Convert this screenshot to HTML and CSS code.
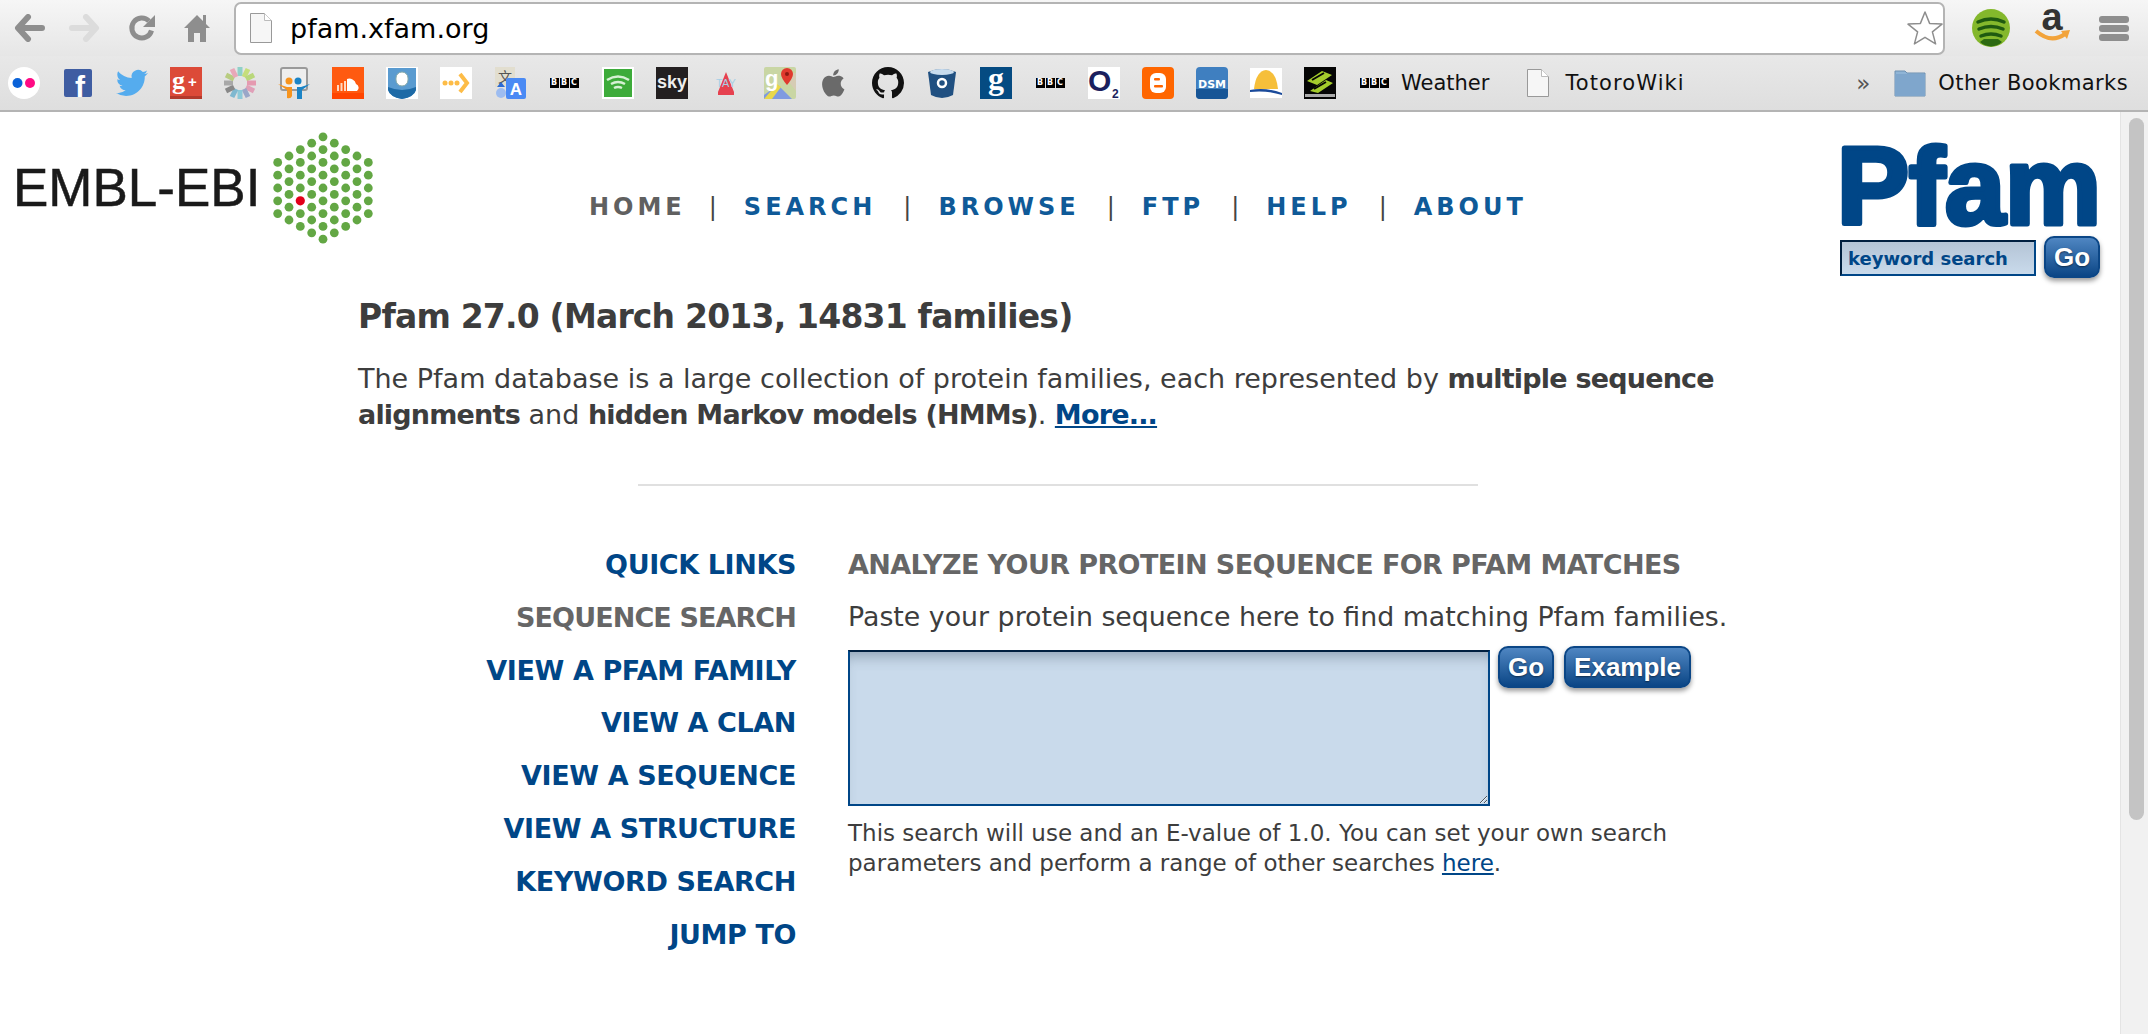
FILE: index.html
```html
<!DOCTYPE html>
<html lang="en">
<head>
    <meta charset="UTF-8">
    <title>Pfam: Home page</title>
    <link rel="stylesheet" href="styles.css">
</head>
<body>
    <div class="toolbar">
        <svg class="tool-icon back" viewBox="0 0 32 28"><path d="M28 14H5M14 3L4 14l10 11" fill="none" stroke="#8e8e8e" stroke-width="6" stroke-linecap="round" stroke-linejoin="round"/></svg>
        <svg class="tool-icon forward" viewBox="0 0 32 28"><path d="M4 14h23M18 3l10 11-10 11" fill="none" stroke="#dcdcdc" stroke-width="6" stroke-linecap="round" stroke-linejoin="round"/></svg>
        <svg class="tool-icon reload" viewBox="0 0 28 28"><path d="M21 7a10 10 0 1 0 2.5 9.5" fill="none" stroke="#8e8e8e" stroke-width="5"/><path d="M27 1v12H15z" fill="#8e8e8e"/></svg>
        <svg class="tool-icon home" viewBox="0 0 26 28"><path d="M13 1L0 14h4v14h6v-9h6v9h6V14h4l-4-4V1h-3v6z" fill="#8e8e8e"/></svg>
        <div class="omnibox">
            <svg class="page-icon" viewBox="0 0 22 30"><path d="M.5.5h14l7 7v22H.5z" fill="#f6f6f6" stroke="#999"/><path d="M14.5.5v7h7" fill="#fff" stroke="#bbb"/></svg>
            <span class="url">pfam.xfam.org</span>
            <svg class="star" viewBox="0 0 36 36"><path d="M18 2l4.6 11.4 12.4.7-9.6 7.8 3.2 12L18 27.3 7.4 33.9l3.2-12L1 14.1l12.4-.7z" fill="#fff" stroke="#8e8e8e" stroke-width="1.5" stroke-linejoin="round"/></svg>
        </div>
        <svg class="ext-icon spotify" viewBox="0 0 38 38"><circle cx="19" cy="19" r="19" fill="#84b82c"/><path d="M8 33a16 16 0 0 0 22 0l-4-3H12z" fill="#2d6a12"/><path d="M6 13q13-6 26 0M7 20q12-5 24 0M9 27q10-4 20 0" fill="none" stroke="#1f5a10" stroke-width="3.5" stroke-linecap="round"/></svg>
        <svg class="ext-icon amazon" viewBox="0 0 36 36"><text x="17" y="20" class="amazon-a">a</text><path d="M1 21q15 13 29 3" fill="none" stroke="#f2a33a" stroke-width="4"/><path d="M26 21l9-1-3 9z" fill="#f2a33a"/></svg>
        <div class="menu-icon"><span></span><span></span><span></span></div>
    </div>

    <div class="bookmarks">
        <div class="favicons">
            <svg viewBox="0 0 32 32"><circle cx="16" cy="16" r="16" fill="#fff"/><circle cx="9.5" cy="16" r="5" fill="#0a62d8"/><circle cx="22" cy="16" r="5" fill="#ff0a84"/></svg>
            <svg viewBox="0 0 32 32"><rect x="2" y="2" width="28" height="28" rx="2" fill="#3f5da2"/><text x="13" y="30" class="fav-f">f</text></svg>
            <svg viewBox="0 0 24 24"><path d="M23.95 4.57a10 10 0 0 1-2.82.77 4.96 4.96 0 0 0 2.16-2.72c-.95.55-2 .96-3.13 1.18a4.92 4.92 0 0 0-8.38 4.48C7.69 8.09 4.07 6.13 1.64 3.16a4.82 4.82 0 0 0-.67 2.48c0 1.71.87 3.21 2.19 4.1a4.9 4.9 0 0 1-2.23-.62v.06a4.92 4.92 0 0 0 3.95 4.83 5 5 0 0 1-2.21.08 4.94 4.94 0 0 0 4.6 3.42A9.87 9.87 0 0 1 0 19.54a14 14 0 0 0 7.56 2.21c9.05 0 14-7.5 14-13.98 0-.21 0-.42-.02-.63A9.94 9.94 0 0 0 24 4.59z" fill="#55acee"/></svg>
            <svg viewBox="0 0 32 32"><rect width="32" height="32" fill="#dc4a38"/><rect y="29" width="32" height="3" fill="#b23a2c"/><text x="2" y="22" class="fav-g">g</text><text x="18" y="20" class="fav-plus">+</text></svg>
            <svg viewBox="0 0 32 32">
                <g stroke-width="5">
                    <path d="M16 0v9" stroke="#8fd0c8"/><path d="M24 2l-4 8" stroke="#c6de7a"/><path d="M30 8l-8 4" stroke="#b9d77a"/><path d="M32 16h-9" stroke="#e59ab0"/>
                    <path d="M30 24l-8-4" stroke="#e0a0b8"/><path d="M24 30l-4-8" stroke="#9aa7c8"/><path d="M16 32v-9" stroke="#8cc9d8"/><path d="M8 30l4-8" stroke="#7fb8d0"/>
                    <path d="M2 24l8-4" stroke="#888"/><path d="M0 16h9" stroke="#a8a8a8"/><path d="M2 8l8 4" stroke="#b8cc80"/><path d="M8 2l4 8" stroke="#e8a8b8"/>
                </g>
            </svg>
            <svg viewBox="0 0 32 32"><rect x="3" y="1" width="26" height="22" rx="2" fill="#eee" stroke="#9a9a9a" stroke-width="2"/><circle cx="11" cy="14" r="3.5" fill="#f7941e"/><circle cx="20" cy="14" r="3.5" fill="#1b84c6"/><path d="M32 17l-9 3h-4v12h5v-9z" fill="#1b84c6"/><path d="M0 17l9 3h5v9q-1 3-5 2v-8z" fill="#f7941e"/></svg>
            <svg viewBox="0 0 32 32"><rect width="32" height="32" fill="#ff5a10"/><rect y="26" width="32" height="6" fill="#ff4500"/><path d="M5 24v-6h2v6zM8.5 24v-8h2v8zM12 24V14h2v10z" fill="#ffd9c4"/><path d="M15 24V12a7 7 0 0 1 9 5 4 4 0 0 1 1 7z" fill="#fff"/></svg>
            <svg viewBox="0 0 32 32"><rect width="32" height="32" fill="#fff"/><path d="M2 1h28v22q-2 7-14 9Q4 30 2 23z" fill="#5a9bd0"/><path d="M2 20q14 6 28 0v3q-2 7-14 9Q4 30 2 23z" fill="#1d6aa6"/><rect x="10" y="5" width="12" height="14" rx="6" fill="#fff" stroke="#8aa"/></svg>
            <svg viewBox="0 0 32 32"><rect width="32" height="32" fill="#fff"/><circle cx="5" cy="16" r="2.5" fill="#fdbc47"/><circle cx="11" cy="16" r="2.5" fill="#fdbc47"/><circle cx="17" cy="16" r="2.5" fill="#fdbc47"/><path d="M20 7l7 9-7 9" fill="none" stroke="#fdbc47" stroke-width="4"/></svg>
            <svg viewBox="0 0 32 32"><rect x="1" width="20" height="20" fill="#e2decf"/><text x="11" y="15" class="fav-cjk">文</text><rect x="12" y="11" width="20" height="21" rx="2" fill="#4a8af4"/><text x="22" y="28" class="fav-a">A</text><circle cx="7" cy="26" r="5" fill="#9dbcf0"/><path d="M7 15l4 5H3z" fill="#2a6ad4"/></svg>
            <div class="bbc"><span>B</span><span>B</span><span>C</span></div>
            <svg viewBox="0 0 32 32"><rect x="1" y="1" width="30" height="30" fill="#3dab3a" stroke="#fff" stroke-width="2"/><path d="M5 13q11-7 22 0M9 17q7-4 14 0M12 21q4-2 8 0" fill="none" stroke="#d6f0d4" stroke-width="2.5"/></svg>
            <svg viewBox="0 0 32 32"><rect width="32" height="32" fill="#231f20"/><text x="16" y="21" class="fav-sky">sky</text></svg>
            <svg viewBox="0 0 32 32"><path d="M16 5l8 20v3H8v-3z" fill="#e6414f"/><text x="16" y="20" class="fav-tay">TAY</text></svg>
            <svg viewBox="0 0 32 32"><rect width="32" height="32" rx="2" fill="#c9d6a4"/><path d="M18 6h14v18z" fill="#d6ccb4"/><path d="M0 28l14-10 14 14H0z" fill="#7f9be0"/><path d="M0 32l13-15 4 3-9 12z" fill="#e8d84c"/><text x="1" y="19" class="fav-maps">g</text><path d="M23 1a6 6 0 0 1 6 6q0 4-6 11-6-7-6-11a6 6 0 0 1 6-6z" fill="#e03a2e"/><circle cx="23" cy="7" r="2" fill="#8c1a12"/></svg>
            <svg viewBox="0 0 24 24"><path d="M17.05 12.54c-.03-2.6 2.12-3.85 2.22-3.91-1.21-1.77-3.09-2.01-3.76-2.04-1.6-.16-3.12.94-3.93.94-.81 0-2.06-.92-3.39-.89-1.74.03-3.35 1.01-4.25 2.57-1.81 3.14-.46 7.79 1.3 10.34.86 1.25 1.89 2.65 3.24 2.6 1.3-.05 1.79-.84 3.36-.84s2.01.84 3.39.81c1.4-.02 2.28-1.27 3.14-2.52.99-1.45 1.4-2.85 1.42-2.92-.03-.01-2.72-1.04-2.74-4.14zM14.47 4.9c.72-.87 1.2-2.08 1.07-3.28-1.03.04-2.28.69-3.02 1.55-.66.77-1.24 2-1.09 3.18 1.15.09 2.32-.58 3.04-1.45z" fill="#6a6a6a"/></svg>
            <svg viewBox="0 0 16 16"><path d="M8 0C3.58 0 0 3.58 0 8c0 3.54 2.29 6.53 5.47 7.59.4.07.55-.17.55-.38 0-.19-.01-.82-.01-1.49-2.01.37-2.53-.49-2.69-.94-.09-.23-.48-.94-.82-1.13-.28-.15-.68-.52-.01-.53.63-.01 1.08.58 1.23.82.72 1.21 1.87.87 2.33.66.07-.52.28-.87.51-1.07-1.78-.2-3.64-.89-3.64-3.95 0-.87.31-1.59.82-2.15-.08-.2-.36-1.02.08-2.12 0 0 .67-.21 2.2.82.64-.18 1.32-.27 2-.27s1.36.09 2 .27c1.53-1.04 2.2-.82 2.2-.82.44 1.1.16 1.92.08 2.12.51.56.82 1.27.82 2.15 0 3.07-1.87 3.75-3.65 3.95.29.25.54.73.54 1.48 0 1.07-.01 1.93-.01 2.2 0 .21.15.46.55.38A8.01 8.01 0 0 0 16 8c0-4.42-3.58-8-8-8z" fill="#111"/></svg>
            <svg viewBox="0 0 32 32"><path d="M2 5q14-6 28 0l-3 23q-11 6-22 0z" fill="#205081"/><ellipse cx="16" cy="5" rx="12" ry="3" fill="#c8dcee"/><circle cx="16" cy="16" r="4" fill="none" stroke="#fff" stroke-width="2.5"/></svg>
            <svg viewBox="0 0 32 32"><rect width="32" height="32" fill="#054b82"/><text x="16" y="22" class="fav-guardian">g</text></svg>
            <div class="bbc"><span>B</span><span>B</span><span>C</span></div>
            <svg viewBox="0 0 32 32"><rect width="32" height="32" fill="#fff"/><text x="0" y="24" class="fav-o">O</text><text x="24" y="31" class="fav-two">2</text></svg>
            <svg viewBox="0 0 32 32"><rect width="32" height="32" rx="4" fill="#ff6600"/><rect x="8" y="6" width="16" height="20" rx="6" fill="#fff"/><rect x="12" y="11" width="6" height="2.5" rx="1" fill="#ff6600"/><rect x="12" y="18" width="9" height="2.5" rx="1" fill="#ff6600"/></svg>
            <svg viewBox="0 0 32 32"><rect width="32" height="32" rx="4" fill="#3f7fc0"/><path d="M0 22h32v6a4 4 0 0 1-4 4H4a4 4 0 0 1-4-4z" fill="#175596"/><text x="16" y="21" class="fav-dsm">DSM</text></svg>
            <svg viewBox="0 0 32 32"><rect y="1" width="32" height="30" fill="#fff"/><path d="M4 22Q6 4 16 3q10 1 12 19z" fill="#f6bf3a"/><path d="M0 23q16-3 32 3v2Q16 23 0 25z" fill="#1a4a9a"/></svg>
            <svg viewBox="0 0 32 32"><rect width="32" height="32" fill="#050505"/><path d="M3 14L18 4l10 4-15 10zM6 24l16-11 7 3-15 10z" fill="#a4cc2c"/><path d="M8 13l12-7M10 22l12-7" stroke="#050505" stroke-width="2"/><rect x="1" y="27" width="30" height="3" fill="#aaa"/></svg>
            <a class="bookmark weather"><div class="bbc"><span>B</span><span>B</span><span>C</span></div>Weather</a>
            <a class="bookmark totoro"><svg class="bookmark-page" viewBox="0 0 22 28"><path d="M.5.5h14l7 7v20H.5z" fill="#f6f6f6" stroke="#999"/><path d="M14.5.5v7h7" fill="#fff" stroke="#bbb"/></svg>TotoroWiki</a>
        </div>
        <div class="other">
            <span class="chevron">»</span>
            <svg class="folder" viewBox="0 0 32 28"><path d="M1 27V2h10l2 2h18v23z" fill="#8fb4d6" stroke="#6d8fb0"/><rect x="1" y="5" width="30" height="22" fill="#7fa6cc"/></svg>
            <span class="other-label">Other Bookmarks</span>
        </div>
    </div>

    <div class="viewport">
        <div class="page">
            <header class="site-header">
                <div class="ebi-logo">
                    <span class="ebi-text">EMBL-EBI</span>
                    <svg class="ebi-hex" viewBox="0 0 100 112">
                        <g fill="#63a744">
                            <circle cx="4.7" cy="30.4" r="4.4"/><circle cx="4.7" cy="43.2" r="4.4"/><circle cx="4.7" cy="56" r="4.4"/><circle cx="4.7" cy="68.8" r="4.4"/><circle cx="4.7" cy="81.6" r="4.4"/>
                            <circle cx="16" cy="24" r="4.4"/><circle cx="16" cy="36.8" r="4.4"/><circle cx="16" cy="49.6" r="4.4"/><circle cx="16" cy="62.4" r="4.4"/><circle cx="16" cy="75.2" r="4.4"/><circle cx="16" cy="88" r="4.4"/>
                            <circle cx="27.3" cy="17.6" r="4.4"/><circle cx="27.3" cy="30.4" r="4.4"/><circle cx="27.3" cy="43.2" r="4.4"/><circle cx="27.3" cy="56" r="4.4"/><circle cx="27.3" cy="81.6" r="4.4"/><circle cx="27.3" cy="94.4" r="4.4"/>
                            <circle cx="38.7" cy="11.2" r="4.4"/><circle cx="38.7" cy="24" r="4.4"/><circle cx="38.7" cy="36.8" r="4.4"/><circle cx="38.7" cy="49.6" r="4.4"/><circle cx="38.7" cy="62.4" r="4.4"/><circle cx="38.7" cy="75.2" r="4.4"/><circle cx="38.7" cy="88" r="4.4"/><circle cx="38.7" cy="100.8" r="4.4"/>
                            <circle cx="50" cy="4.8" r="4.4"/><circle cx="50" cy="17.6" r="4.4"/><circle cx="50" cy="30.4" r="4.4"/><circle cx="50" cy="43.2" r="4.4"/><circle cx="50" cy="56" r="4.4"/><circle cx="50" cy="68.8" r="4.4"/><circle cx="50" cy="81.6" r="4.4"/><circle cx="50" cy="94.4" r="4.4"/><circle cx="50" cy="107.2" r="4.4"/>
                            <circle cx="61.3" cy="11.2" r="4.4"/><circle cx="61.3" cy="24" r="4.4"/><circle cx="61.3" cy="36.8" r="4.4"/><circle cx="61.3" cy="49.6" r="4.4"/><circle cx="61.3" cy="62.4" r="4.4"/><circle cx="61.3" cy="75.2" r="4.4"/><circle cx="61.3" cy="88" r="4.4"/><circle cx="61.3" cy="100.8" r="4.4"/>
                            <circle cx="72.7" cy="17.6" r="4.4"/><circle cx="72.7" cy="30.4" r="4.4"/><circle cx="72.7" cy="43.2" r="4.4"/><circle cx="72.7" cy="56" r="4.4"/><circle cx="72.7" cy="68.8" r="4.4"/><circle cx="72.7" cy="81.6" r="4.4"/><circle cx="72.7" cy="94.4" r="4.4"/>
                            <circle cx="84" cy="24" r="4.4"/><circle cx="84" cy="36.8" r="4.4"/><circle cx="84" cy="49.6" r="4.4"/><circle cx="84" cy="62.4" r="4.4"/><circle cx="84" cy="75.2" r="4.4"/><circle cx="84" cy="88" r="4.4"/>
                            <circle cx="95.3" cy="30.4" r="4.4"/><circle cx="95.3" cy="43.2" r="4.4"/><circle cx="95.3" cy="56" r="4.4"/><circle cx="95.3" cy="68.8" r="4.4"/><circle cx="95.3" cy="81.6" r="4.4"/>
                        </g>
                        <circle cx="27.3" cy="68.8" r="4.6" fill="#e2001a"/>
                    </svg>
                </div>
                <nav class="site-nav">
                    <a class="current">HOME</a><span class="sep">|</span>
                    <a>SEARCH</a><span class="sep">|</span>
                    <a>BROWSE</a><span class="sep">|</span>
                    <a>FTP</a><span class="sep">|</span>
                    <a>HELP</a><span class="sep">|</span>
                    <a>ABOUT</a>
                </nav>
                <div class="pfam-box">
                    <svg class="pfam-logo" viewBox="0 0 270 92"><text x="2" y="84" textLength="264" lengthAdjust="spacingAndGlyphs">Pfam</text></svg>
                    <div class="keyword-row">
                        <input class="keyword" type="text" value="keyword search">
                        <button class="btn">Go</button>
                    </div>
                </div>
            </header>

            <main class="content">
                <h1>Pfam 27.0 (March 2013, 14831 families)</h1>
                <p class="intro">The Pfam database is a large collection of protein families, each represented by <strong>multiple sequence alignments</strong> and <strong>hidden Markov models (HMMs)</strong>. <a class="more">More...</a></p>
                <hr class="divider">

                <div class="columns">
                    <ul class="quick-links">
                        <li class="link">QUICK LINKS</li>
                        <li class="active">SEQUENCE SEARCH</li>
                        <li class="link">VIEW A PFAM FAMILY</li>
                        <li class="link">VIEW A CLAN</li>
                        <li class="link">VIEW A SEQUENCE</li>
                        <li class="link">VIEW A STRUCTURE</li>
                        <li class="link">KEYWORD SEARCH</li>
                        <li class="link">JUMP TO</li>
                    </ul>
                    <section class="panel">
                        <h2>ANALYZE YOUR PROTEIN SEQUENCE FOR PFAM MATCHES</h2>
                        <p class="paste">Paste your protein sequence here to find matching Pfam families.</p>
                        <div class="seq-row">
                            <textarea class="seq-input"></textarea>
                            <button class="btn">Go</button>
                            <button class="btn">Example</button>
                        </div>
                        <p class="note">This search will use and an E-value of 1.0. You can set your own search parameters and perform a range of other searches <a>here</a>.</p>
                    </section>
                </div>
            </main>
        </div>
        <div class="scrollbar"><div class="thumb"></div></div>
    </div>
</body>
</html>
```

FILE: styles.css
```css
/* Base Styles */
* {
    margin: 0;
    padding: 0;
    box-sizing: border-box;
}

html, body {
    height: 100%;
    overflow: hidden;
}

body {
    font-family: "DejaVu Sans", sans-serif;
    background-color: #fff;
    color: #3d3d3d;
    display: flex;
    flex-direction: column;
}

/* Browser toolbar */
.toolbar {
    height: 56px;
    display: flex;
    align-items: center;
    background: linear-gradient(#f6f6f6, #e6e6e6);
}

.tool-icon {
    height: 28px;
    flex: none;
}

.back {
    width: 32px;
    margin-left: 14px;
}

.forward {
    width: 32px;
    margin-left: 22px;
}

.reload {
    width: 28px;
    margin-left: 28px;
}

.home {
    width: 26px;
    margin-left: 28px;
}

.omnibox {
    width: 1711px;
    height: 53px;
    margin-left: 24px;
    display: flex;
    align-items: center;
    background-color: #fff;
    border: 2px solid #b4b4b4;
    border-radius: 7px;
    padding: 0 0 0 14px;
}

.page-icon {
    width: 22px;
    height: 30px;
}

.url {
    margin-left: 18px;
    font-size: 27px;
    color: #000;
}

.star {
    width: 36px;
    height: 36px;
    margin-left: auto;
}

.ext-icon {
    flex: none;
}

.spotify {
    width: 38px;
    height: 38px;
    margin-left: 27px;
}

.amazon {
    width: 36px;
    height: 36px;
    margin-left: 25px;
    overflow: visible;
}

.amazon-a {
    font-family: "Liberation Sans", sans-serif;
    font-weight: bold;
    font-size: 38px;
    fill: #333;
    text-anchor: middle;
}

.menu-icon {
    width: 30px;
    margin-left: 28px;
    display: flex;
    flex-direction: column;
    gap: 2px;
}

.menu-icon span {
    height: 7px;
    border-radius: 3px;
    background-color: #8e8e8e;
}

/* Bookmarks bar */
.bookmarks {
    height: 56px;
    display: flex;
    align-items: center;
    background: linear-gradient(#e8e8e8, #dedede);
    border-bottom: 2px solid #b4b4b4;
    font-size: 21px;
    color: #111;
}

.favicons {
    display: flex;
    align-items: center;
    gap: 22px;
    padding-left: 8px;
}

.favicons > svg {
    width: 32px;
    height: 32px;
    flex: none;
}

.bbc {
    width: 32px;
    flex: none;
    display: flex;
    justify-content: center;
    gap: 1px;
}

.bbc span {
    width: 9px;
    height: 10px;
    background-color: #000;
    color: #fff;
    font-size: 8px;
    line-height: 10px;
    font-weight: bold;
    text-align: center;
}

.bookmark {
    display: flex;
    align-items: center;
    flex: none;
}

.weather {
    gap: 11px;
}

.totoro {
    margin-left: 16px;
    gap: 16px;
    letter-spacing: 1.1px;
}

.bookmark-page {
    width: 22px;
    height: 28px;
}

.other {
    margin-left: auto;
    padding-right: 20px;
    display: flex;
    align-items: center;
}

.other-label {
    letter-spacing: 0.4px;
}

.chevron {
    margin-right: 24px;
    font-size: 23px;
    color: #555;
}

.folder {
    width: 32px;
    height: 28px;
    margin-right: 12px;
}

/* Favicon lettering */
.fav-f {
    font: bold 30px "Liberation Sans", sans-serif;
    fill: #fff;
}

.fav-g {
    font: bold 26px "Liberation Serif", serif;
    fill: #fff;
}

.fav-plus {
    font: bold 15px "Liberation Sans", sans-serif;
    fill: #fff;
}

.fav-cjk {
    font: 14px "Noto Sans CJK SC", sans-serif;
    fill: #555;
    text-anchor: middle;
}

.fav-a {
    font: bold 17px "Liberation Sans", sans-serif;
    fill: #fff;
    text-anchor: middle;
}

.fav-sky {
    font: bold 18px "Liberation Sans", sans-serif;
    fill: #eee;
    text-anchor: middle;
}

.fav-tay {
    font: 11px "Liberation Sans", sans-serif;
    fill: #a6cfe6;
    text-anchor: middle;
}

.fav-maps {
    font: bold 22px "Liberation Sans", sans-serif;
    fill: #fff;
}

.fav-guardian {
    font: bold 32px "Liberation Serif", serif;
    fill: #fff;
    text-anchor: middle;
}

.fav-o {
    font: bold 30px "Liberation Sans", sans-serif;
    fill: #1b1f5e;
}

.fav-two {
    font: bold 12px "Liberation Sans", sans-serif;
    fill: #1b1f5e;
}

.fav-dsm {
    font: bold 11px "DejaVu Sans", sans-serif;
    fill: #fff;
    text-anchor: middle;
}

/* Page area */
.viewport {
    flex: 1;
    display: flex;
    min-height: 0;
}

.page {
    flex: 1;
    min-width: 0;
}

.scrollbar {
    width: 28px;
    flex: none;
    padding: 6px 4px 0 8px;
    background-color: #f1f1f1;
    border-left: 1px solid #e4e4e4;
}

.thumb {
    height: 702px;
    border-radius: 8px;
    background-color: #c4c4c4;
}

/* Site header */
.site-header {
    display: flex;
    height: 170px;
}

.ebi-logo {
    width: 589px;
    flex: none;
    display: flex;
    padding: 20px 0 0 13px;
}

.ebi-text {
    font-family: "Liberation Sans", sans-serif;
    font-size: 53px;
    line-height: 112px;
    height: 112px;
    color: #1a1a1a;
    -webkit-text-stroke: 0.5px #1a1a1a;
}

.ebi-hex {
    width: 100px;
    height: 112px;
    margin-left: 13px;
}

.site-nav {
    flex: 1;
    display: flex;
    align-items: flex-start;
    padding-top: 80px;
    font-size: 24px;
    line-height: 30px;
    font-weight: bold;
    letter-spacing: 4px;
    color: #0f5a98;
}

.site-nav .current {
    margin-right: -4px;
    color: #606060;
}

.sep {
    margin: 0 27px;
    font-weight: normal;
    color: #444;
    letter-spacing: 0;
}

.pfam-box {
    width: 280px;
    flex: none;
    padding-top: 28px;
}

.pfam-logo {
    display: block;
    width: 270px;
    height: 92px;
    margin-left: -5px;
}

.pfam-logo text {
    font-family: "Liberation Sans", sans-serif;
    font-size: 110px;
    font-weight: bold;
    fill: #004687;
    stroke: #004687;
    stroke-width: 5px;
    stroke-linejoin: round;
}

.keyword-row {
    display: flex;
    align-items: flex-start;
    gap: 8px;
    margin-top: 4px;
}

.keyword {
    width: 196px;
    height: 36px;
    margin-top: 4px;
    padding-left: 6px;
    font-family: inherit;
    font-size: 18px;
    font-weight: bold;
    color: #004687;
    background: linear-gradient(#b4c4d6, #c9daeb);
    border: 2px solid #004687;
    border-top-color: #001f3f;
    border-left-color: #001f3f;
    border-radius: 0;
}

.btn {
    height: 42px;
    padding: 0 8px;
    font-family: "Liberation Sans", sans-serif;
    font-size: 26px;
    font-weight: bold;
    color: #fff;
    background: linear-gradient(#4f86c2, #0b4686);
    border: 2px solid #0b4686;
    border-radius: 10px;
    box-shadow: 0 3px 5px rgba(0, 0, 0, 0.4);
    text-shadow: 0 1px 2px rgba(0, 0, 0, 0.5);
}

/* Main content */
.content {
    padding-left: 358px;
}

h1 {
    font-size: 33px;
    line-height: 40px;
    letter-spacing: -0.8px;
    margin-top: 15px;
}

.intro {
    width: 1370px;
    margin-top: 24px;
    font-size: 27px;
    line-height: 36px;
}

.intro strong,
.more {
    letter-spacing: -0.8px;
}

.more {
    font-weight: bold;
    color: #004687;
    text-decoration: underline;
}

.divider {
    width: 840px;
    height: 2px;
    margin: 51px 0 0 280px;
    border: none;
    background-color: #e0e0e0;
}

.columns {
    display: flex;
    gap: 52px;
    margin-top: 53px;
}

.quick-links {
    width: 438px;
    flex: none;
    list-style: none;
    text-align: right;
    font-size: 27px;
    font-weight: bold;
    line-height: 52.8px;
    letter-spacing: -0.4px;
}

.link {
    color: #004687;
}

.active {
    color: #666;
    letter-spacing: -0.9px;
}

.panel {
    flex: 1;
}

h2 {
    font-size: 27px;
    line-height: 52px;
    letter-spacing: -0.6px;
    color: #666;
}

.paste {
    font-size: 26.8px;
    line-height: 52px;
}

.seq-row {
    display: flex;
    align-items: flex-start;
    gap: 10px;
    margin-top: 3px;
}

.seq-input {
    width: 642px;
    height: 156px;
    margin-top: 4px;
    margin-right: -2px;
    background-color: #c9daeb;
    border: 2px solid #004687;
    border-top-color: #001f3f;
    box-shadow: inset 0 12px 14px -8px rgba(70, 90, 110, 0.45);
    border-radius: 0;
    outline: none;
}

.note {
    width: 860px;
    margin-top: 12px;
    font-size: 23px;
    line-height: 30px;
}

.note a {
    color: #004687;
    text-decoration: underline;
}
```
